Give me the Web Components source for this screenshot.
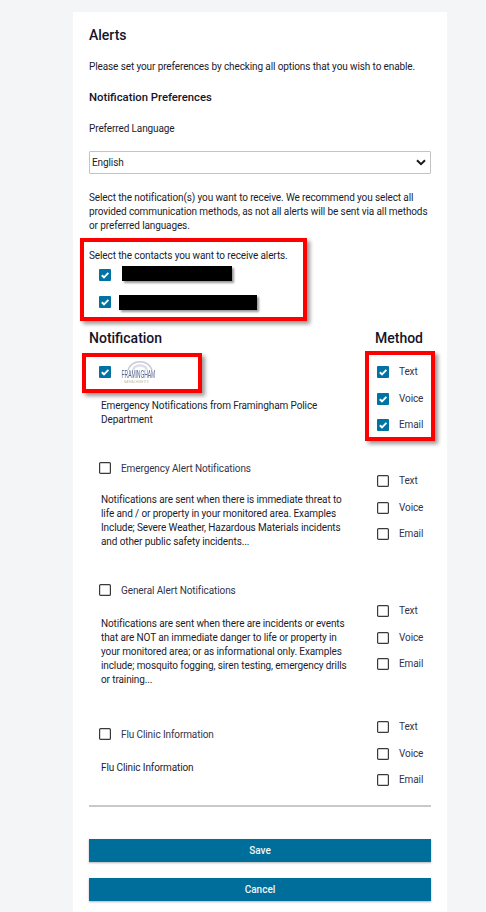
<!DOCTYPE html>
<html lang="en">
<head>
<meta charset="utf-8">
<title>Alerts</title>
<style>
	html, body {
		margin: 0;
		background: #f4f5f7;
		font-family: Roboto, "Liberation Sans", sans-serif;
		color: #1c1c2b;
	}
</style>
</head>
<body>
<alerts-card></alerts-card>

<script>
class UiCheck extends HTMLElement {
	connectedCallback() {
		const checked = this.hasAttribute('checked');
		this.attachShadow({ mode: 'open' }).innerHTML = /*html*/ `
			<style>
				:host { display: block; flex: none; width: 12px; height: 12px; }
				svg { display: block; }
			</style>
			<svg width="12" height="12" viewBox="0 0 12 12">
				${checked
					? `<rect width="12" height="12" rx="1" fill="#0072a3"/>
					   <path d="M2.8 6.2 5 8.3 9.4 3.9" fill="none" stroke="#fff" stroke-width="1.9"/>`
					: `<rect x=".6" y=".6" width="10.8" height="10.8" rx="1" fill="#fff" stroke="#3a3a3a" stroke-width="1.2"/>`}
			</svg>
		`;
	}
}

class MethodItem extends HTMLElement {
	connectedCallback() {
		this.attachShadow({ mode: 'open' }).innerHTML = /*html*/ `
			<style>
				:host { display: flex; gap: 10px; height: 26.5px; font-size: 10px; line-height: 12px; letter-spacing: -.1px; color: #33334a; }
			</style>
			<ui-check ${this.hasAttribute('checked') ? 'checked' : ''}></ui-check>
			<span><slot></slot></span>
		`;
	}
}

class NotificationRow extends HTMLElement {
	connectedCallback() {
		const on = this.hasAttribute('checked') ? 'checked' : '';
		const methods = ['Text', 'Voice', 'Email']
			.map((m) => `<method-item ${on}>${m}</method-item>`)
			.join('');
		this.attachShadow({ mode: 'open' }).innerHTML = /*html*/ `
			<style>
				:host { display: flex; justify-content: space-between; margin-top: var(--row-gap, 0); }
				.left { flex: none; padding-top: var(--left-top, 0); padding-left: 10px; width: 250px; }
				.head { display: flex; gap: 10px; height: 12px; align-items: center; font-size: 10px; letter-spacing: -.1px; color: #33334a; }
				.desc { margin: var(--desc-gap, 21px) 0 0 2px; font-size: 10px; line-height: 14px; letter-spacing: -.11px; }
				.methods { flex: none; padding-top: var(--method-top, 0); width: 54px; }
			</style>
			<div class="left">
				<div class="head"><ui-check ${on}></ui-check><slot name="title"></slot></div>
				<div class="desc"><slot></slot></div>
			</div>
			<div class="methods">${methods}</div>
		`;
	}
}

class FraminghamLogo extends HTMLElement {
	connectedCallback() {
		this.attachShadow({ mode: 'open' }).innerHTML = /*html*/ `
			<style>
				:host { display: block; flex: none; width: 38px; height: 25px; }
				svg { display: block; }
				text { font-family: "Liberation Sans", sans-serif; }
			</style>
			<svg width="38" height="25" viewBox="0 0 38 25">
				<defs><filter id="soft" x="-10%" y="-10%" width="120%" height="120%"><feGaussianBlur stdDeviation=".4"/></filter></defs>
				<g filter="url(#soft)">
					<path d="M7 10C11 -1 27 -1 31 10" fill="none" stroke="#c5cad8" stroke-width="1.6"/>
					<path d="M12 10C14 4 24 4 26 10" fill="none" stroke="#dcdfe8" stroke-width="2.4"/>
					<text transform="translate(.6 18) scale(.5 1)" font-size="10" fill="#5a6690">FRAMINGHAM</text>
					<text transform="translate(3 23) scale(.8 1)" font-size="3.6" fill="#b9bba2">MASSACHUSETTS</text>
				</g>
			</svg>
		`;
	}
}

class RedBox extends HTMLElement {
	connectedCallback() {
		this.attachShadow({ mode: 'open' }).innerHTML = /*html*/ `
			<style>
				:host {
					position: absolute;
					box-sizing: border-box;
					border: 4px solid #fe0000;
					box-shadow: 3px 3px 4px rgba(0, 0, 0, .4);
					pointer-events: none;
				}
			</style>
		`;
	}
}

class LangSelect extends HTMLElement {
	connectedCallback() {
		this.attachShadow({ mode: 'open' }).innerHTML = /*html*/ `
			<style>
				:host {
					display: flex;
					align-items: center;
					justify-content: space-between;
					box-sizing: border-box;
					height: 23px;
					margin-top: 15px;
					padding: 0 4px 0 2px;
					background: #fff;
					border: 1px solid #c4c4c4;
					border-radius: 1px;
					font-size: 10px;
					letter-spacing: -.1px;
					color: #1c1c1c;
				}
				svg { display: block; }
			</style>
			<span><slot></slot></span>
			<svg width="10" height="7" viewBox="0 0 10 7"><path d="M1 1.2 5 5.2 9 1.2" fill="none" stroke="#1a1a1a" stroke-width="2"/></svg>
		`;
	}
}

class UiButton extends HTMLElement {
	connectedCallback() {
		this.attachShadow({ mode: 'open' }).innerHTML = /*html*/ `
			<style>
				:host {
					display: flex;
					align-items: center;
					justify-content: center;
					height: 23px;
					background: #006e9b;
					box-shadow: 0 1px 2px rgba(0, 0, 0, .3);
					color: #f2f6f8;
					font-size: 10px;
					font-weight: 500;
				}
			</style>
			<slot></slot>
		`;
	}
}

class AlertsCard extends HTMLElement {
	connectedCallback() {
		this.attachShadow({ mode: 'open' }).innerHTML = /*html*/ `
			<style>
				:host { display: block; box-sizing: border-box; width: 374px; margin: 12px 0 0 73px; padding: 13px 16px 0; position: relative; background: #fff; }
				h1, h2, h3, p { margin: 0; }
				h1 { font-size: 14px; line-height: 20px; font-weight: 500; color: #14142a; }
				h2 { margin-top: 16px; font-size: 11.3px; line-height: 16px; font-weight: 500; color: #14142a; }
				p { margin-top: 16px; font-size: 10px; line-height: 14px; letter-spacing: -.11px; }
				p.intro { margin-top: 15px; }
				p.after-select { margin-top: 17px; }
				.contact { display: flex; height: 12px; padding-left: 10px; margin-top: 15px; }
				.contact.first { margin-top: 6px; }
				.bar { height: 15px; background: #000; box-shadow: 2px 2px 2px rgba(0, 0, 0, .4); }
				.bar-1 { width: 110px; margin: -3px 0 0 11px; }
				.bar-2 { width: 138px; margin: -1px 0 0 8px; }
				.cols { display: flex; justify-content: space-between; margin-top: 21px; padding-right: 8px; font-size: 14px; line-height: 18px; font-weight: 500; color: #14142a; }
				.rows { margin-top: 19px; }
				hr { height: 2px; margin: 4.5px 0 0; border: 0; background: #c9c9c9; }
				.actions { display: flex; flex-direction: column; gap: 16px; margin-top: 32px; padding-bottom: 11px; }
				.box-contacts { left: 7px; top: 226px; width: 227px; height: 83px; }
				.box-logo { left: 9px; top: 341px; width: 120px; height: 40px; }
				.box-methods { left: 292px; top: 339px; width: 70px; height: 90px; }
			</style>
			<h1>Alerts</h1>
			<p class="intro">Please set your preferences by checking all options that you wish to enable.</p>
			<h2>Notification Preferences</h2>
			<p>Preferred Language</p>
			<lang-select>English</lang-select>
			<p class="after-select">Select the notification(s) you want to receive. We recommend you select all provided communication methods, as not all alerts will be sent via all methods or preferred languages.</p>
			<p>Select the contacts you want to receive alerts.</p>
			<div class="contact first"><ui-check checked></ui-check><div class="bar bar-1"></div></div>
			<div class="contact"><ui-check checked></ui-check><div class="bar bar-2"></div></div>
			<div class="cols"><span>Notification</span><span>Method</span></div>
			<div class="rows">
				<notification-row checked>
					<framingham-logo slot="title"></framingham-logo>
					Emergency Notifications from Framingham Police Department
				</notification-row>
				<notification-row style="--row-gap: 16.5px; --method-top: 13px; --desc-gap: 19px">
					<span slot="title">Emergency Alert Notifications</span>
					Notifications are sent when there is immediate threat to life and / or property in your monitored area. Examples Include; Severe Weather, Hazardous Materials incidents and other public safety incidents...
				</notification-row>
				<notification-row style="--row-gap: 29.5px; --method-top: 21px">
					<span slot="title">General Alert Notifications</span>
					Notifications are sent when there are incidents or events that are NOT an immediate danger to life or property in your monitored area; or as informational only. Examples include; mosquito fogging, siren testing, emergency drills or training...
				</notification-row>
				<notification-row style="--row-gap: 34px; --left-top: 7px">
					<span slot="title">Flu Clinic Information</span>
					Flu Clinic Information
				</notification-row>
			</div>
			<hr>
			<div class="actions">
				<ui-button>Save</ui-button>
				<ui-button>Cancel</ui-button>
			</div>
			<red-box class="box-contacts"></red-box>
			<red-box class="box-logo"></red-box>
			<red-box class="box-methods"></red-box>
		`;
	}
}

customElements.define('ui-check', UiCheck);
customElements.define('method-item', MethodItem);
customElements.define('notification-row', NotificationRow);
customElements.define('framingham-logo', FraminghamLogo);
customElements.define('red-box', RedBox);
customElements.define('lang-select', LangSelect);
customElements.define('ui-button', UiButton);
customElements.define('alerts-card', AlertsCard);
</script>
</body>
</html>
